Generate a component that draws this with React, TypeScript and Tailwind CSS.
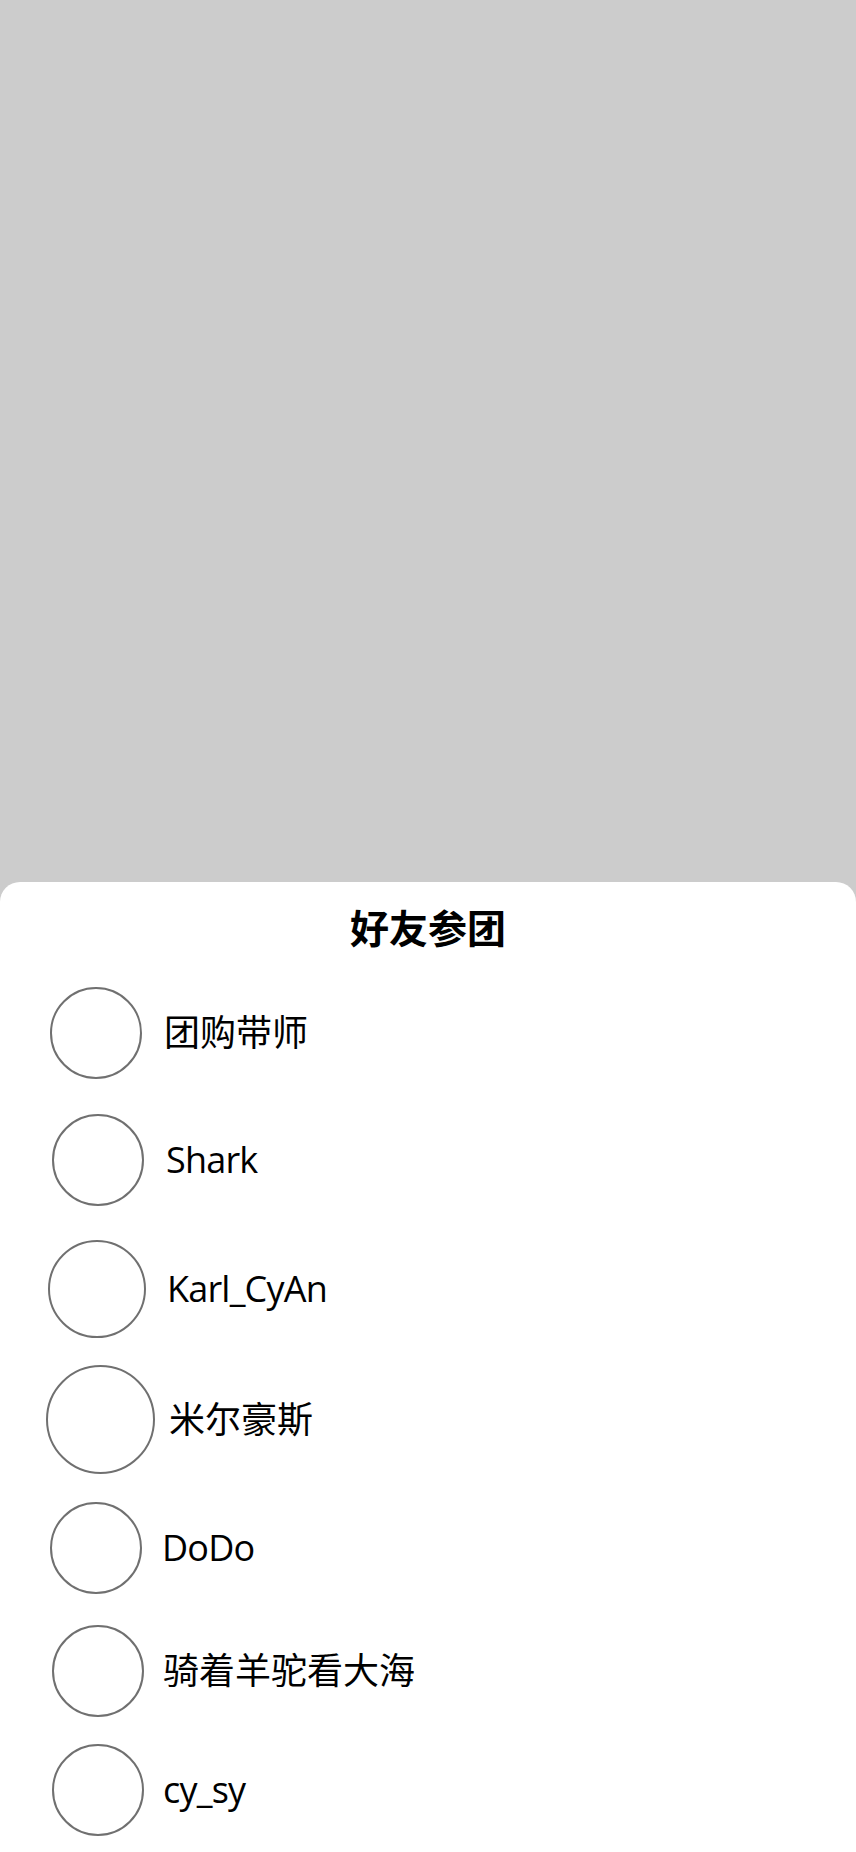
const friends = [
  { name: "团购带师", latin: false, size: "w-[92px] h-[92px]", ml: "ml-[50px]", gap: "ml-[22px]", row: "h-[126px]" },
  { name: "Shark", latin: true, size: "w-[92px] h-[92px]", ml: "ml-[52px]", gap: "ml-[22px]", row: "h-[127px]" },
  { name: "Karl_CyAn", latin: true, size: "w-[98px] h-[98px]", ml: "ml-[48px]", gap: "ml-[21px]", row: "h-[131px]" },
  { name: "米尔豪斯", latin: false, size: "w-[109px] h-[109px]", ml: "ml-[46px]", gap: "ml-[14px]", row: "h-[131px]" },
  { name: "DoDo", latin: true, size: "w-[92px] h-[92px]", ml: "ml-[50px]", gap: "ml-[20px]", row: "h-[126px]" },
  { name: "骑着羊驼看大海", latin: false, size: "w-[92px] h-[92px]", ml: "ml-[52px]", gap: "ml-[19px]", row: "h-[119px]" },
  { name: "cy_sy", latin: true, size: "w-[92px] h-[92px]", ml: "ml-[52px]", gap: "ml-[19px]", row: "h-[120px]" },
];

export default function App() {
  return (
    <div
      className="w-[856px] h-[1852px] bg-[#cccccc] flex flex-col overflow-hidden"
      style={{ fontFamily: '"Open Sans", "Noto Sans CJK SC", sans-serif' }}
    >
      <div className="h-[882px] shrink-0" />
      <div className="flex-1 bg-white rounded-t-[20px]">
        {/* title */}
        <div className="h-[88px] flex items-center justify-center">
          <h1 className="text-[39px] font-bold text-black leading-none" style={{ fontFamily: '"Noto Sans CJK SC", sans-serif' }}>
            好友参团
          </h1>
        </div>

        {/* friend list */}
        <ul>
          {friends.map((f) => (
            <li key={f.name} className={`flex items-center ${f.row}`}>
              <div className={`${f.ml} ${f.size} shrink-0 rounded-full border-2 border-[#707070] bg-white`} />
              <span className={`${f.gap} text-[36px] text-black leading-none ${f.latin ? "tracking-[-0.8px]" : ""}`}>
                {f.name}
              </span>
            </li>
          ))}
        </ul>
      </div>
    </div>
  );
}
